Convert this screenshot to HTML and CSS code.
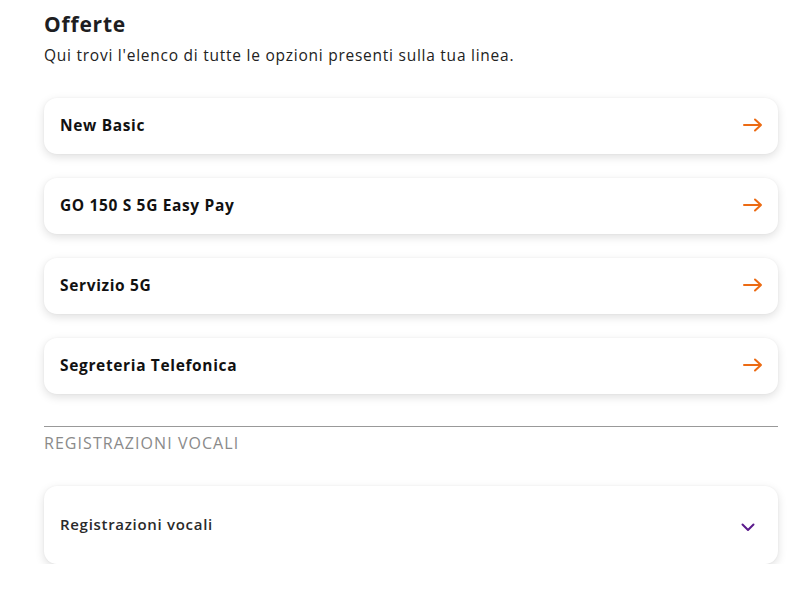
FILE: index.html
```html
<!DOCTYPE html>
<html lang="it">
<head>
<meta charset="utf-8">
<title>Offerte</title>
<link rel="stylesheet" href="styles.css">
</head>
<body>
<main class="page">
  <h1 class="title">Offerte</h1>
  <p class="subtitle">Qui trovi l'elenco di tutte le opzioni presenti sulla tua linea.</p>
  <ul class="offers">
    <li class="card"><span class="card-name">New Basic</span>
      <svg class="arrow" viewBox="0 0 20 14" width="20" height="14"><path d="M1 7H18M12 1.5L18 7L12 12.5" fill="none" stroke="#ec6b13" stroke-width="2" stroke-linecap="round" stroke-linejoin="round"/></svg></li>
    <li class="card"><span class="card-name">GO 150 S 5G Easy Pay</span>
      <svg class="arrow" viewBox="0 0 20 14" width="20" height="14"><path d="M1 7H18M12 1.5L18 7L12 12.5" fill="none" stroke="#ec6b13" stroke-width="2" stroke-linecap="round" stroke-linejoin="round"/></svg></li>
    <li class="card"><span class="card-name">Servizio 5G</span>
      <svg class="arrow" viewBox="0 0 20 14" width="20" height="14"><path d="M1 7H18M12 1.5L18 7L12 12.5" fill="none" stroke="#ec6b13" stroke-width="2" stroke-linecap="round" stroke-linejoin="round"/></svg></li>
    <li class="card"><span class="card-name">Segreteria Telefonica</span>
      <svg class="arrow" viewBox="0 0 20 14" width="20" height="14"><path d="M1 7H18M12 1.5L18 7L12 12.5" fill="none" stroke="#ec6b13" stroke-width="2" stroke-linecap="round" stroke-linejoin="round"/></svg></li>
  </ul>
  <div class="section">
    <h2 class="section-title">REGISTRAZIONI VOCALI</h2>
  </div>
  <div class="card card-tall">
    <span class="card-name card-name-soft">Registrazioni vocali</span>
    <svg class="chevron" viewBox="0 0 14 9" width="14" height="9"><path d="M1.5 1.5L7 7L12.5 1.5" fill="none" stroke="#5b1a8c" stroke-width="2" stroke-linecap="round" stroke-linejoin="round"/></svg>
  </div>
</main>
</body>
</html>
```
FILE: styles.css
```css
* { box-sizing: border-box; }
html, body { margin: 0; padding: 0; background: #fff; }
body {
  font-family: "Open Sans", "Liberation Sans", sans-serif;
  color: #1d1d1f;
}
.page {
  width: 734px;
  margin-left: 44px;
  padding-top: 10px;
}
.title {
  margin: 0;
  font-size: 21px;
  line-height: 28px;
  font-weight: 700;
  letter-spacing: 0.8px;
  color: #1e1e22;
}
.subtitle {
  margin: 6px 0 0;
  font-size: 15.5px;
  line-height: 22px;
  letter-spacing: 0.75px;
  color: #222;
}
.offers {
  list-style: none;
  margin: 32px 0 0;
  padding: 0;
  display: flex;
  flex-direction: column;
  gap: 24px;
}
.card {
  height: 56px;
  background: #fff;
  border-radius: 13px;
  box-shadow: 0 3px 10px rgba(0,0,0,0.13), 0 0 2px rgba(0,0,0,0.05);
  display: flex;
  align-items: center;
  justify-content: space-between;
  padding: 0 15px 2px 16px;
}
.card-name {
  font-size: 15.5px;
  font-weight: 700;
  letter-spacing: 0.65px;
  color: #111;
}
.card-name-soft { font-weight: 600; color: #2a2a2a; font-size: 15px; letter-spacing: 0.7px; }
.arrow { display: block; }
.section {
  margin-top: 32px;
  border-top: 1px solid #999;
}
.section-title {
  margin: 0;
  padding-top: 6px;
  font-size: 16px;
  line-height: 20px;
  font-weight: 400;
  letter-spacing: 1.05px;
  color: #8a8a8a;
}
.card-tall {
  margin-top: 33px;
  height: 78px;
  padding-right: 23px;
}
.chevron { display: block; margin-top: 6px; }
```
